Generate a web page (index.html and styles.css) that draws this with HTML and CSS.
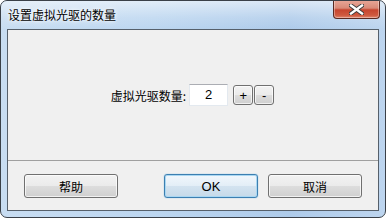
FILE: index.html
```html
<!DOCTYPE html>
<html>
<head>
<meta charset="utf-8">
<link rel="stylesheet" href="styles.css">
</head>
<body>
<div class="window">
  <div class="titlebar">
    <span class="title">设置虚拟光驱的数量</span>
    <div class="close" aria-label="关闭">
      <svg width="15" height="11" viewBox="0 0 15 11">
        <path d="M2 1.5 L13 9.5 M13 1.5 L2 9.5" stroke="#3a3a3a" stroke-width="4.2" stroke-linecap="square"/>
        <path d="M2 1.5 L13 9.5 M13 1.5 L2 9.5" stroke="#ffffff" stroke-width="2.4" stroke-linecap="square"/>
      </svg>
    </div>
  </div>
  <div class="client">
    <div class="content">
      <span class="label">虚拟光驱数量:</span>
      <div class="input">2</div>
      <button class="btn small">+</button>
      <button class="btn small">-</button>
    </div>
    <div class="footer">
      <button class="btn wide">帮助</button>
      <div class="spacer"></div>
      <button class="btn wide default">OK</button>
      <button class="btn wide">取消</button>
    </div>
  </div>
</div>
</body>
</html>
```

FILE: styles.css
```css
html, body {
  margin: 0;
  padding: 0;
  background: #ffffff;
}
body {
  font-family: "Noto Sans CJK SC", "Liberation Sans", sans-serif;
  font-size: 12px;
  color: #000;
}
.window {
  position: relative;
  box-sizing: border-box;
  width: 386px;
  height: 218px;
  border: 1px solid #3a4048;
  border-radius: 7px;
  background: linear-gradient(to right, #c8ddf2 0%, #bcd6f0 40%, #aecbea 75%, #bdd5ef 100%);
  display: flex;
  flex-direction: column;
  overflow: hidden;
}
.titlebar {
  height: 28px;
  flex: none;
  display: flex;
  align-items: flex-start;
  padding-left: 7px;
  background: linear-gradient(to bottom, rgba(255,255,255,0.55) 0%, rgba(255,255,255,0.15) 60%, rgba(255,255,255,0) 100%);
}
.title {
  margin-top: 6px;
  line-height: 16px;
  color: #000;
  text-shadow: 0 0 6px #fff, 0 0 3px #fff;
}
.close {
  position: absolute;
  top: -1px;
  right: 5px;
  width: 47px;
  height: 19px;
  box-sizing: border-box;
  border: 1px solid #5a2a22;
  border-top: none;
  border-radius: 0 0 4px 4px;
  background: linear-gradient(to bottom, #e9a899 0%, #d98a78 45%, #c7452f 55%, #cf5a40 85%, #e08870 100%);
  box-shadow: inset 0 0 0 1px rgba(255,255,255,0.35);
  display: flex;
  align-items: center;
  justify-content: center;
}
.client {
  flex: 1;
  margin: 0 6px 6px 6px;
  border: 1px solid #56606b;
  background: #f0f0f0;
  display: flex;
  flex-direction: column;
}
.content {
  height: 130px;
  display: flex;
  align-items: center;
  justify-content: center;
}
.label {
  margin-right: 3px;
  margin-top: 1px;
}
.input {
  width: 39px;
  height: 22px;
  box-sizing: border-box;
  border: 1px solid #e3e9ef;
  border-top-color: #abadb3;
  background: #fff;
  text-align: center;
  line-height: 20px;
  font-size: 13px;
  margin-right: 5px;
  font-family: "Liberation Sans", sans-serif;
}
.btn {
  box-sizing: border-box;
  border: 1px solid #707070;
  border-radius: 3px;
  background: linear-gradient(to bottom, #f2f2f2 0%, #ebebeb 49%, #dddddd 51%, #cfcfcf 100%);
  box-shadow: inset 0 0 0 1px rgba(255,255,255,0.7);
  font-family: inherit;
  font-size: 12px;
  color: #000;
  padding: 0;
  margin: 0;
}
.small {
  width: 20px;
  height: 20px;
  margin-right: 1px;
  font-family: "Liberation Sans", sans-serif;
  font-size: 13px;
  line-height: 18px;
  padding-top: 1px;
}
.footer {
  flex: 1;
  border-top: 1px solid #a0a0a0;
  display: flex;
  align-items: flex-start;
  padding: 13px 16px 0 16px;
}
.spacer {
  flex: 1;
}
.wide {
  width: 94px;
  height: 24px;
}
.wide + .wide {
  margin-left: 10px;
}
.default {
  border-color: #3c7fb1;
  background: linear-gradient(to bottom, #f1f7fc 0%, #e3eef7 49%, #d3e3f0 51%, #c6dae9 100%);
  box-shadow: inset 0 0 0 1px #a9d7f2, 0 0 1px #3c9fe0;
  font-family: "Liberation Sans", sans-serif;
  font-size: 13px;
}
```
